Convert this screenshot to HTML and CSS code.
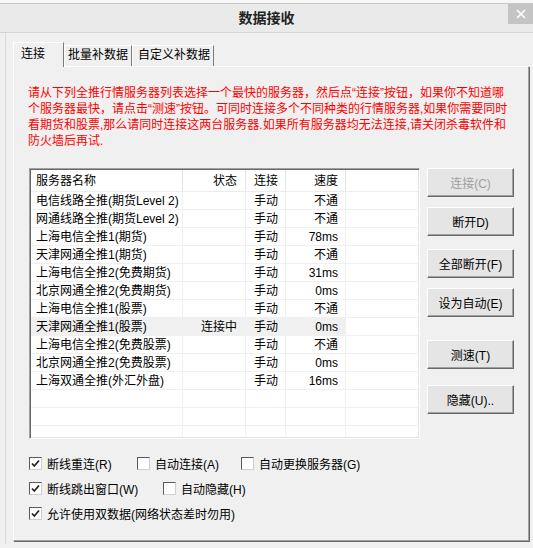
FILE: index.html
```html
<!DOCTYPE html>
<html>
<head>
<meta charset="utf-8">
<link rel="stylesheet" href="styles.css">
</head>
<body>
<div class="window">
  <div class="titlebar">
    <div></div>
    <div class="title">数据接收</div>
    <div class="close"><svg width="10" height="10" viewBox="0 0 10 10"><path d="M1 1 L9 9 M9 1 L1 9" stroke="#fff" stroke-width="1.6" fill="none"/></svg></div>
  </div>
  <div class="client">
    <div class="tabs">
      <div class="tab active">连接</div>
      <div class="tab t2">批量补数据</div>
      <div class="tab t3">自定义补数据</div>
    </div>
    <div class="panel">
      <p class="notice">请从下列全推行情服务器列表选择一个最快的服务器，然后点“连接”按钮，如果你不知道哪<br>个服务器最快，请点击“测速”按钮。可同时连接多个不同种类的行情服务器,如果你需要同时<br>看期货和股票,那么请同时连接这两台服务器.如果所有服务器均无法连接,请关闭杀毒软件和<br>防火墙后再试.</p>
      <div class="main">
        <div class="list">
          <div class="row head"><div class="c1">服务器名称</div><div class="c2">状态</div><div class="c3">连接</div><div class="c4">速度</div><div></div></div>
          <div class="row"><div class="c1">电信线路全推(期货Level 2)</div><div class="c2"></div><div class="c3">手动</div><div class="c4">不通</div><div></div></div>
          <div class="row"><div class="c1">网通线路全推(期货Level 2)</div><div class="c2"></div><div class="c3">手动</div><div class="c4">不通</div><div></div></div>
          <div class="row"><div class="c1">上海电信全推1(期货)</div><div class="c2"></div><div class="c3">手动</div><div class="c4">78ms</div><div></div></div>
          <div class="row"><div class="c1">天津网通全推1(期货)</div><div class="c2"></div><div class="c3">手动</div><div class="c4">不通</div><div></div></div>
          <div class="row"><div class="c1">上海电信全推2(免费期货)</div><div class="c2"></div><div class="c3">手动</div><div class="c4">31ms</div><div></div></div>
          <div class="row"><div class="c1">北京网通全推2(免费期货)</div><div class="c2"></div><div class="c3">手动</div><div class="c4">0ms</div><div></div></div>
          <div class="row"><div class="c1">上海电信全推1(股票)</div><div class="c2"></div><div class="c3">手动</div><div class="c4">不通</div><div></div></div>
          <div class="row sel"><div class="c1">天津网通全推1(股票)</div><div class="c2">连接中</div><div class="c3">手动</div><div class="c4">0ms</div><div></div></div>
          <div class="row"><div class="c1">上海电信全推2(免费股票)</div><div class="c2"></div><div class="c3">手动</div><div class="c4">不通</div><div></div></div>
          <div class="row"><div class="c1">北京网通全推2(免费股票)</div><div class="c2"></div><div class="c3">手动</div><div class="c4">0ms</div><div></div></div>
          <div class="row"><div class="c1">上海双通全推(外汇外盘)</div><div class="c2"></div><div class="c3">手动</div><div class="c4">16ms</div><div></div></div>
          <div class="row"><div class="c1"></div><div class="c2"></div><div class="c3"></div><div class="c4"></div><div></div></div>
          <div class="row"><div class="c1"></div><div class="c2"></div><div class="c3"></div><div class="c4"></div><div></div></div>
          <div class="row"><div class="c1"></div><div class="c2"></div><div class="c3"></div><div class="c4"></div><div></div></div>
        </div>
        <div class="buttons">
          <div class="btn disabled">连接(C)</div>
          <div class="btn b2">断开D)</div>
          <div class="btn b3">全部断开(F)</div>
          <div class="btn b4">设为自动(E)</div>
          <div class="btn b5">测速(T)</div>
          <div class="btn b6">隐藏(U)..</div>
        </div>
      </div>
      <div class="options">
        <div class="optrow">
          <div class="opt w108"><span class="cb"><svg width="11" height="11" viewBox="0 0 11 11"><path d="M2 5.5 L4.3 8 L9 2.5" stroke="#222" stroke-width="1.7" fill="none"/></svg></span>断线重连(R)</div>
          <div class="opt w104"><span class="cb"></span>自动连接(A)</div>
          <div class="opt"><span class="cb"></span>自动更换服务器(G)</div>
        </div>
        <div class="optrow">
          <div class="opt w134"><span class="cb"><svg width="11" height="11" viewBox="0 0 11 11"><path d="M2 5.5 L4.3 8 L9 2.5" stroke="#222" stroke-width="1.7" fill="none"/></svg></span>断线跳出窗口(W)</div>
          <div class="opt"><span class="cb"></span>自动隐藏(H)</div>
        </div>
        <div class="optrow">
          <div class="opt"><span class="cb"><svg width="11" height="11" viewBox="0 0 11 11"><path d="M2 5.5 L4.3 8 L9 2.5" stroke="#222" stroke-width="1.7" fill="none"/></svg></span>允许使用双数据(网络状态差时勿用)</div>
        </div>
      </div>
    </div>
  </div>
</div>
</body>
</html>
```

FILE: styles.css
```css
html, body {
  margin: 0;
  padding: 0;
}
body {
  width: 533px;
  height: 548px;
  overflow: hidden;
  background: #f7f7f7;
  font-family: "Liberation Sans", "Noto Sans CJK SC", sans-serif;
  font-size: 12px;
  color: #000;
}
.window {
  margin-top: 3px;
  border-top: 1px solid #c9c9c9;
  background: #f0f0f0;
  height: 544px;
}
.titlebar {
  display: grid;
  grid-template-columns: 25px 1fr 25px;
  height: 28px;
  background: #eaeaea;
  border-bottom: 1px solid #d4d4d4;
}
.title {
  text-align: center;
  font-weight: bold;
  font-size: 14px;
  line-height: 28px;
  color: #222;
}
.close {
  height: 20px;
  background: #c4c4c4;
  display: flex;
  align-items: center;
  justify-content: center;
}
.client {
  margin-left: 5px;
  border-left: 1px solid #dadada;
  padding: 9px 0 0 7px;
  height: 502px;
}
.tabs {
  display: flex;
  align-items: flex-end;
  height: 24px;
}
.tab {
  box-sizing: border-box;
  height: 21px;
  line-height: 19px;
  border-top: 1px solid #fff;
  border-left: 1px solid #fff;
  border-right: 1px solid #7a7a7a;
  background: #f0f0f0;
  white-space: nowrap;
}
.tab.active {
  position: relative;
  z-index: 1;
  height: 25px;
  margin-bottom: -1px;
  width: 51px;
  padding-left: 7px;
  line-height: 23px;
}
.t2 {
  width: 68px;
  padding-left: 3px;
}
.t3 {
  width: 82px;
  padding-left: 5px;
}
.panel {
  box-sizing: border-box;
  width: 516px;
  height: 475px;
  border-top: 1px solid #fff;
  border-left: 1px solid #fff;
  border-right: 1px solid #a0a0a0;
  border-bottom: 1px solid #a0a0a0;
  box-shadow: 1px 1px 0 #696969;
  padding: 18px 0 0 14px;
}
.notice {
  margin: 0;
  color: #f00;
  line-height: 16px;
  white-space: nowrap;
}
.main {
  display: flex;
  margin-top: 19px;
}
.list {
  box-sizing: border-box;
  width: 391px;
  height: 271px;
  margin-left: 1px;
  padding: 1px;
  border: 1px solid;
  border-color: #a0a0a0 #fff #fff #a0a0a0;
  box-shadow: inset 1px 1px 0 #696969, inset -1px -1px 0 #e3e3e3;
  background: #fff;
  overflow: hidden;
}
.row {
  display: grid;
  grid-template-columns: 152px 63px 40px 60px 1fr;
  height: 18px;
}
.row > div {
  box-sizing: border-box;
  border-right: 1px solid #f0f0f0;
  border-bottom: 1px solid #f0f0f0;
  line-height: 19px;
  white-space: nowrap;
  overflow: hidden;
}
.row > div:last-child {
  border-right: none;
}
.head {
  height: 22px;
}
.head > div {
  line-height: 22px;
  border-right-color: #e3e3e3;
  border-bottom-color: #ececec;
}
.c1 {
  padding-left: 5px;
}
.c2 {
  text-align: right;
  padding-right: 8px;
}
.c3 {
  padding-left: 8px;
}
.c4 {
  text-align: right;
  padding-right: 7px;
}
.sel > div:not(:last-child) {
  background: #f0f0f0;
}
.buttons {
  display: flex;
  flex-direction: column;
  margin-left: 7px;
}
.btn {
  box-sizing: border-box;
  width: 87px;
  height: 29px;
  background: #e5e5e5;
  border: 1px solid;
  border-color: #fff #696969 #696969 #fff;
  box-shadow: inset -1px -1px 0 #a0a0a0, inset 1px 1px 0 #e3e3e3;
  display: flex;
  align-items: center;
  justify-content: center;
  white-space: nowrap;
}
.disabled {
  color: #a0a0a0;
}
.b2 { margin-top: 10px; }
.b3 { margin-top: 13px; }
.b4 { margin-top: 10px; }
.b5 { margin-top: 23px; }
.b6 { margin-top: 16px; }
.options {
  margin-top: 12px;
  margin-left: 1px;
}
.optrow {
  display: flex;
  align-items: center;
  height: 25px;
}
.opt {
  display: flex;
  align-items: center;
  gap: 5px;
  white-space: nowrap;
}
.w108 { width: 108px; }
.w104 { width: 104px; }
.w134 { width: 134px; }
.cb {
  box-sizing: border-box;
  width: 13px;
  height: 13px;
  background: #fff;
  border: 1px solid;
  border-color: #5a5a5a #cfcfcf #cfcfcf #5a5a5a;
  display: flex;
  align-items: center;
  justify-content: center;
  flex: none;
}
```
